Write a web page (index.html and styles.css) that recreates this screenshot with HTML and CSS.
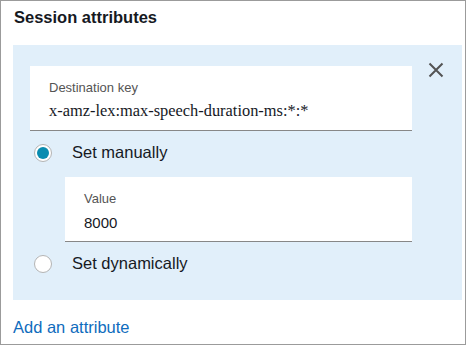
FILE: index.html
```html
<!DOCTYPE html>
<html>
  <head>
    <title>Session attributes</title>
    <link rel="stylesheet" href="styles.css">
  </head>
  <body>
    <div class="card">
      <h2 class="title">Session attributes</h2>
      <div class="panel">
        <div class="keyRow">
          <div class="field keyField">
            <div class="label">Destination key</div>
            <div class="keyValue">x-amz-lex:max-speech-duration-ms:*:*</div>
          </div>
          <svg class="close" width="16" height="16" viewBox="0 0 16 16">
            <path d="M1.5 1.5 L14.5 14.5 M14.5 1.5 L1.5 14.5" stroke="#545454" stroke-width="2" fill="none"/>
          </svg>
        </div>
        <div class="radioRow">
          <span class="radio checked"></span>
          <span class="radioText">Set manually</span>
        </div>
        <div class="field valueField">
          <div class="label">Value</div>
          <div class="numValue">8000</div>
        </div>
        <div class="radioRow dyn">
          <span class="radio"></span>
          <span class="radioText">Set dynamically</span>
        </div>
      </div>
      <a class="addLink" href="#">Add an attribute</a>
    </div>
  </body>
</html>
```

FILE: styles.css
```css
body {
  margin: 0;
  font-family: "Liberation Sans", Arial, sans-serif;
}
.card {
  width: 466px;
  height: 345px;
  box-sizing: border-box;
  border: 1px solid #9b9b9b;
  background: #fff;
  padding: 6px 3px 0 12px;
}
.title {
  margin: 0 0 17px 1px;
  font-size: 16.5px;
  line-height: 21px;
  font-weight: bold;
  color: #16191f;
}
.panel {
  background: #e1effa;
  height: 255px;
  box-sizing: border-box;
  padding: 17px 0 0 17px;
}
.keyRow {
  display: flex;
  align-items: flex-start;
  gap: 16px;
}
.field {
  background: #fff;
  border-bottom: 1px solid #878787;
  padding: 14px 19px 0 19px;
  box-sizing: border-box;
}
.keyField {
  width: 382px;
  height: 65px;
  margin-top: 4px;
}
.label {
  font-size: 13px;
  line-height: 16px;
  color: #545454;
}
.keyValue {
  margin-top: 5px;
  font-family: "Liberation Serif", "Times New Roman", serif;
  font-size: 16.4px;
  line-height: 20px;
  color: #16191f;
}
.radioRow {
  display: flex;
  align-items: center;
  padding: 11px 0 14px 4px;
  height: 21px;
}
.radio {
  width: 18px;
  height: 18px;
  box-sizing: border-box;
  border-radius: 50%;
  border: 1px solid #b4b4b4;
  background: #fff;
  display: flex;
  align-items: center;
  justify-content: center;
}
.radio.checked::after {
  content: "";
  width: 12px;
  height: 12px;
  border-radius: 50%;
  background: #0a8cb0;
}
.radioText {
  margin-left: 20px;
  font-size: 16.5px;
  line-height: 21px;
  color: #16191f;
}
.valueField {
  width: 347px;
  height: 65px;
  margin-left: 35px;
}
.numValue {
  margin-top: 6px;
  font-size: 15px;
  line-height: 20px;
  color: #16191f;
}
.addLink {
  display: block;
  margin-top: 17px;
  font-size: 16.5px;
  line-height: 21px;
  color: #0f6cbd;
  text-decoration: none;
}
```
